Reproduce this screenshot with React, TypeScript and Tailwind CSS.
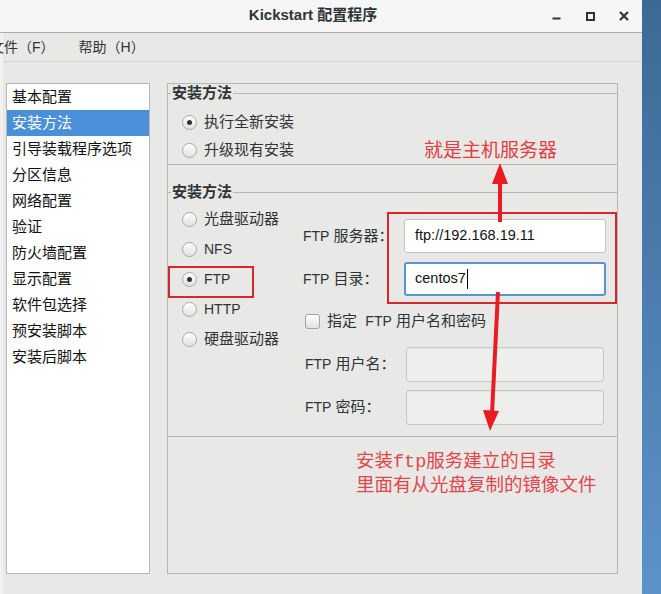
import React from "react";

const ui = "font-['Liberation_Sans','Noto_Sans_CJK_SC',sans-serif]";
const cjk = "font-['Noto_Sans_CJK_SC',sans-serif]";

const sections = [
  "基本配置",
  "安装方法",
  "引导装载程序选项",
  "分区信息",
  "网络配置",
  "验证",
  "防火墙配置",
  "显示配置",
  "软件包选择",
  "预安装脚本",
  "安装后脚本",
];

function Radio({ checked }: { checked?: boolean }) {
  return (
    <span className="flex h-[15px] w-[15px] shrink-0 items-center justify-center rounded-full border border-[#a8a8a8] bg-linear-to-b from-white to-[#e2e2e2]">
      {checked && <span className="h-[5px] w-[5px] rounded-full bg-[#2e3436]" />}
    </span>
  );
}

function RadioRow({ label, checked, latin }: { label: string; checked?: boolean; latin?: boolean }) {
  return (
    <div className="flex items-center gap-[7px]">
      <Radio checked={checked} />
      <span className={latin ? "text-[14px]" : "text-[15px]"}>{label}</span>
    </div>
  );
}

function TitleBar() {
  return (
    <div className="flex h-[33px] items-center border-b border-[#adadad] bg-[#f6f6f6]">
      <div className="flex-1 pb-[2px] pl-[87px] text-center text-[15px] font-bold text-[#2e3436]">
        Kickstart 配置程序
      </div>
      <div className="mr-[1px] flex text-[#2e3436]">
        <div className="flex h-[32px] w-[34px] items-center justify-center">
          <svg width="9" height="9" viewBox="0 0 9 9">
            <rect x="0.5" y="5.5" width="8" height="2" fill="currentColor" />
          </svg>
        </div>
        <div className="flex h-[32px] w-[34px] items-center justify-center">
          <svg width="9" height="9" viewBox="0 0 9 9">
            <rect x="1" y="1" width="7" height="7" fill="none" stroke="currentColor" strokeWidth="2" />
          </svg>
        </div>
        <div className="flex h-[32px] w-[34px] items-center justify-center">
          <svg width="10" height="10" viewBox="0 0 10 10">
            <path d="M1 1 L9 9 M9 1 L1 9" stroke="currentColor" strokeWidth="2.2" />
          </svg>
        </div>
      </div>
    </div>
  );
}

function MenuBar() {
  return (
    <div className="flex h-[29px] items-center gap-[24px] border-b border-[#d2d2d2] text-[14px] text-[#2e3436]">
      <span className="-ml-[13px]">文件（F）</span>
      <span>帮助（H）</span>
    </div>
  );
}

function SectionList() {
  return (
    <div className="ml-[3px] h-[491px] w-[144px] border border-[#b8b8b8] bg-white">
      {sections.map((s) => (
        <div
          key={s}
          className={
            "flex h-[26px] items-center pl-[5px] text-[15px] " +
            (s === "安装方法" ? "bg-[#4a90d9] text-white" : "text-[#111]")
          }
        >
          {s}
        </div>
      ))}
    </div>
  );
}

function Field({ label, children, indent }: { label: React.ReactNode; children: React.ReactNode; indent?: boolean }) {
  return (
    <div className={"flex items-center " + (indent ? "pl-[2px]" : "")}>
      <span className="w-[101px] text-[15px] text-[#2e3436]">{label}</span>
      {children}
    </div>
  );
}

function FtpPanel() {
  return (
    <div className="flex flex-col">
      <div className="mt-[18px]">
        <Field label={<><span className="text-[14px]">FTP</span> 服务器：</>}>
          <div className="flex h-[34px] w-[202px] items-center rounded-[3px] border border-[#c4c4c4] bg-white pl-[10px] text-[14.5px] text-[#111]">
            ftp://192.168.19.11
          </div>
        </Field>
      </div>
      <div className="mt-[9px]">
        <Field label={<><span className="text-[14px]">FTP</span> 目录：</>}>
          <div className="flex h-[34px] w-[202px] items-center rounded-[3px] border-2 border-[#5b93d0] bg-white pl-[9px] text-[14.5px] text-[#111]">
            centos7
            <span className="ml-px h-[20px] w-px bg-black" />
          </div>
        </Field>
      </div>
      <div className="mt-[18px] flex h-[15px] items-center gap-[7px] pl-[2px]">
        <span className="h-[15px] w-[15px] rounded-[3px] border border-[#a3a3a3] bg-linear-to-b from-white to-[#e2e2e2]" />
        <span className="whitespace-pre text-[15px] text-[#2e3436]">
          指定  <span className="text-[14px]">FTP</span> 用户名和密码
        </span>
      </div>
      <div className="mt-[18px]">
        <Field indent label={<><span className="text-[14px]">FTP</span> 用户名：</>}>
          <div className="h-[35px] w-[198px] rounded-[3px] border border-[#c6c6c6] bg-[#eeeeed] shadow-[inset_0_1px_1px_rgba(0,0,0,0.04)]" />
        </Field>
      </div>
      <div className="mt-[8px] pb-[11px]">
        <Field indent label={<><span className="text-[14px]">FTP</span> 密码：</>}>
          <div className="h-[35px] w-[198px] rounded-[3px] border border-[#c6c6c6] bg-[#eeeeed] shadow-[inset_0_1px_1px_rgba(0,0,0,0.04)]" />
        </Field>
      </div>
    </div>
  );
}

function InstallPanel() {
  return (
    <div className="ml-[17px] h-[491px] w-[451px] border border-[#b6b6b6] text-[#2e3436]">
      <fieldset className="border-y border-[#b6b6b6]">
        <legend className="ml-[3px] px-px text-[15px] font-bold leading-[18px]">安装方法</legend>
        <div className="flex flex-col pl-[14px] pt-[6px]">
          <div className="flex h-[28px] items-center">
            <RadioRow label="执行全新安装" checked />
          </div>
          <div className="flex h-[28px] items-center">
            <RadioRow label="升级现有安装" />
          </div>
        </div>
      </fieldset>
      <fieldset className="mt-[18px] border-y border-[#b6b6b6]">
        <legend className="ml-[3px] px-px text-[15px] font-bold leading-[18px]">安装方法</legend>
        <div className="flex">
          <div className="flex w-[135px] flex-col pl-[14px] pt-[3px]">
            {[
              { label: "光盘驱动器" },
              { label: "NFS", latin: true },
              { label: "FTP", latin: true, checked: true },
              { label: "HTTP", latin: true },
              { label: "硬盘驱动器" },
            ].map((r) => (
              <div key={r.label} className="flex h-[30px] items-center">
                <RadioRow label={r.label} latin={r.latin} checked={r.checked} />
              </div>
            ))}
          </div>
          <FtpPanel />
        </div>
      </fieldset>
    </div>
  );
}

function Annotations() {
  return (
    <div className="pointer-events-none absolute inset-0">
      <div className="absolute left-[168px] top-[266px] h-[32px] w-[86px] border-2 border-[#d8262d]" />
      <div className="absolute left-[387px] top-[212px] h-[92px] w-[230px] border-2 border-[#d8262d]" />
      <svg className="absolute left-0 top-0" width="661" height="594" viewBox="0 0 661 594">
        <line x1="500" y1="222" x2="500" y2="180" stroke="#ea1b23" strokeWidth="4" />
        <polygon points="500,163 492,184 508,184" fill="#ea1b23" />
        <line x1="498" y1="292" x2="492" y2="414" stroke="#ea1b23" strokeWidth="4" />
        <polygon points="490,431 483,410 499,411" fill="#ea1b23" />
      </svg>
      <div className={"absolute left-[424px] top-[139px] text-[19px] leading-[19px] text-[#e03d42] " + cjk}>
        就是主机服务器
      </div>
      <div className={"absolute left-[356px] top-[449px] text-[18.5px] leading-[20px] text-[#e2464b] " + cjk}>
        <div>
          安装<span className="font-['Liberation_Mono',monospace]">ftp</span>服务建立的目录
        </div>
        <div>里面有从光盘复制的镜像文件</div>
      </div>
    </div>
  );
}

export default function App() {
  return (
    <div className={"relative flex h-[594px] w-[661px] overflow-hidden " + ui}>
      <div className="flex w-[642px] flex-col overflow-hidden bg-[#e8e8e7]">
        <TitleBar />
        <div className="flex flex-1 flex-col border-l-[3px] border-[#f1f1f1]">
          <MenuBar />
          <div className="flex pt-[21px]">
            <SectionList />
            <InstallPanel />
          </div>
        </div>
      </div>
      <div className="w-[19px] bg-linear-to-b from-[#3d6a95] to-[#5d92c9]" />
      <Annotations />
    </div>
  );
}
